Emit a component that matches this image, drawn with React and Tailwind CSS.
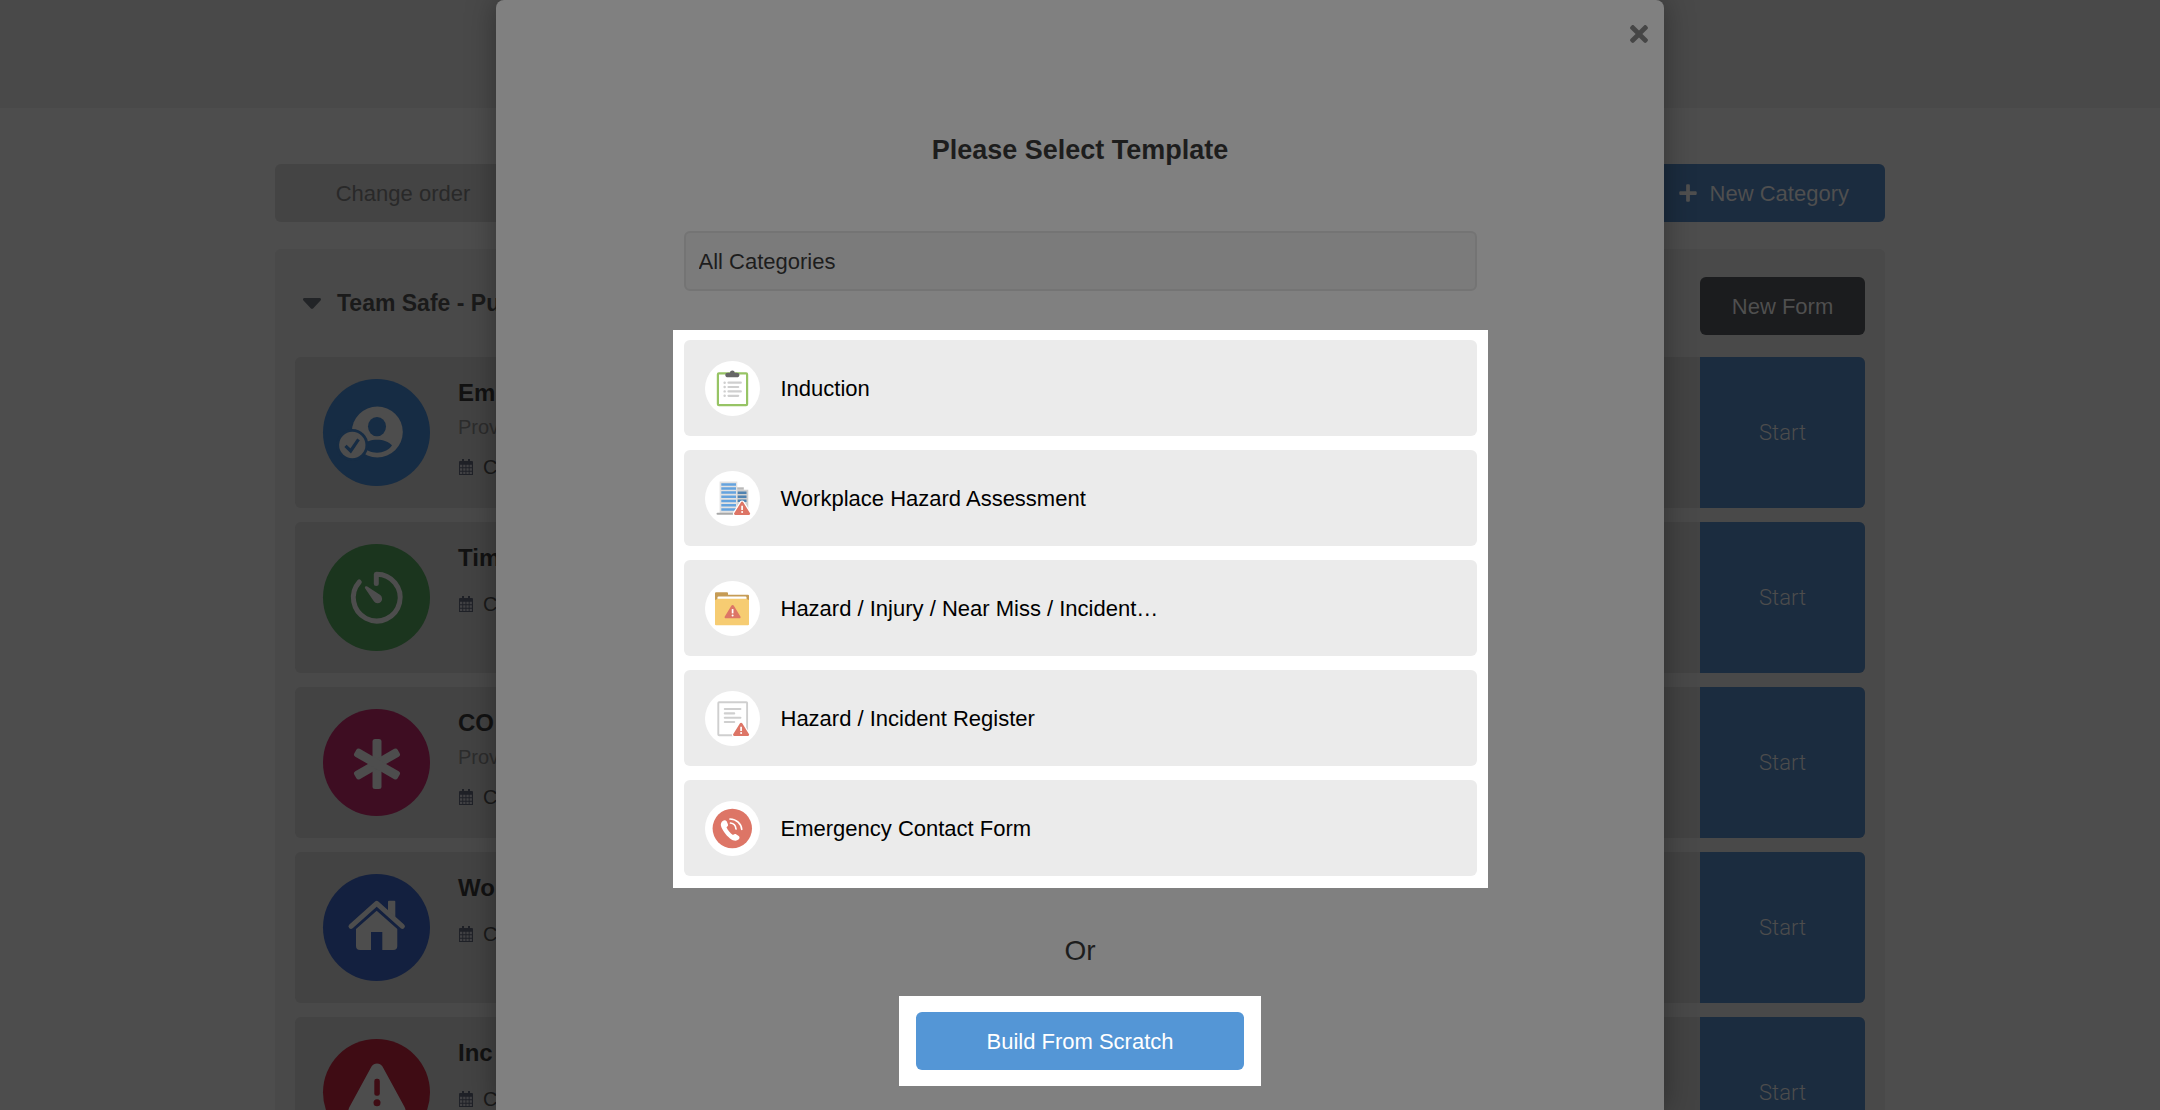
import React from 'react';
import { FaPlus, FaTimes } from 'react-icons/fa';

function PersonIcon() {
  return (
    <svg viewBox="0 0 107 107" className="size-full" aria-hidden="true">
      <circle cx="54.3" cy="53" r="25.5" fill="#4d4d4d" />
      <ellipse cx="54" cy="47.6" rx="9" ry="9.7" fill="#162c44" />
      <path d="M39 66.5C42 62.5 48 60.7 54 60.7s12 2 15 5.8c-3 4.5-9 7.2-15 7.2S43 71.5 39 66.5z" fill="#162c44" />
      <circle cx="29.3" cy="66" r="16" fill="#162c44" />
      <circle cx="29.3" cy="66" r="13.2" fill="#4d4d4d" />
      <path d="M22.5 66.800l5.200 5.200 7.800-11.700" fill="none" stroke="#162c44" strokeWidth="3.2" />
    </svg>
  );
}

function TimerIcon() {
  return (
    <svg viewBox="0 0 107 107" className="size-full" aria-hidden="true">
      <path
        d="M53.3 39.5V30.2A23.4 23.4 0 1 1 36.3 38"
        fill="none"
        stroke="#4d4d4d"
        strokeWidth="5"
        strokeLinecap="round"
        strokeLinejoin="round"
      />
      <path d="M42.300 42.600c.6-.6 1.400-.4 2 0l13 8.500a4.500 4.500 0 1 1-6.300 6.300l-8.800-12.800c-.4-.6-.5-1.500.1-2z" fill="#4d4d4d" />
    </svg>
  );
}

function AsteriskIcon() {
  return (
    <svg viewBox="0 0 107 107" className="size-full" aria-hidden="true">
      <g fill="#4d4d4d">
        <rect x="49.5" y="30" width="9" height="50" rx="2.5" />
        <rect x="49.5" y="30" width="9" height="50" rx="2.5" transform="rotate(60 54 55)" />
        <rect x="49.5" y="30" width="9" height="50" rx="2.5" transform="rotate(120 54 55)" />
      </g>
    </svg>
  );
}

function HomeIcon() {
  return (
    <svg viewBox="0 0 107 107" className="size-full" aria-hidden="true">
      <path d="M65 27.700a1 1 0 0 1 1-1h5.300a1 1 0 0 1 1 1V44L65 38z" fill="#4d4d4d" />
      <path d="M28 52.300L53.700 29.300l25.700 23" fill="none" stroke="#4d4d4d" strokeWidth="5" strokeLinecap="round" strokeLinejoin="round" />
      <path d="M53.700 36.700L74.300 55v17a4 4 0 0 1-4 4H59.300V58H48v18H37a4 4 0 0 1-4-4V55z" fill="#4d4d4d" />
    </svg>
  );
}

function WarningIcon() {
  return (
    <svg viewBox="0 0 107 107" className="size-full" aria-hidden="true">
      <path d="M48.500 27.500c2.500-4 8.500-4 11 0L81 67c4 7 1 12-5 12H32c-6 0-9-5-5-12z" fill="#4d4d4d" />
      <rect x="51.3" y="39.7" width="5.5" height="17" rx="2.3" fill="#3f0c14" />
      <circle cx="54" cy="63.7" r="3.5" fill="#3f0c14" />
    </svg>
  );
}

function CalendarIcon() {
  return (
    <svg viewBox="0 0 14 16" className="h-4 w-[14px]" aria-hidden="true">
      <path d="M1 2h12a1 1 0 0 1 1 1v13H0V3a1 1 0 0 1 1-1zM3 0h2v3H3zM9 0h2v3H9z" fill="#1f2127" />
      <path
        d="M1 7h12M1 10.500h12M1 13.800h12"
        stroke="#414144"
        strokeWidth="2.300"
        strokeDasharray="2.300 .9"
      />
    </svg>
  );
}

function CaretIcon() {
  return (
    <svg viewBox="0 0 18 11" className="h-[11px] w-[18px]" aria-hidden="true">
      <path d="M1.500 0h15c1.400 0 2 1.500 1 2.500l-7 7.500a2 2 0 0 1-3 0l-7-7.500C-.5 1.500.1 0 1.500 0z" fill="#222427" />
    </svg>
  );
}

// Red triangle shared by the hazard icons, drawn on a 16x13 box
function Hazard({ x, y, outline = '#fff' }) {
  return (
    <g transform={`translate(${x} ${y})`}>
      <path
        d="M7 .7a1.300 1.300 0 0 1 2.200 0l6.700 10.800a1.200 1.200 0 0 1-1 1.900H1.300a1.200 1.200 0 0 1-1-1.900z"
        fill="#dd7566"
        stroke={outline}
        strokeWidth="2.400"
        paintOrder="stroke"
      />
      <path d="M8.100 4.200v4.300" stroke="#fff" strokeWidth="1.700" />
      <circle cx="8.100" cy="10.500" r="1" fill="#fff" />
    </g>
  );
}

function ClipboardIcon() {
  return (
    <svg viewBox="0 0 55 55" className="size-full" aria-hidden="true">
      <rect x="12.900" y="12.400" width="29.200" height="31.800" rx="1" fill="#fff" stroke="#97c465" strokeWidth="2.200" />
      <path d="M20.300 14c0-1.500 1-2.300 2.700-2.300h2c0-3 4.700-3 4.700 0h2c1.700 0 2.700.8 2.700 2.300s-1 2.300-2.700 2.300H23c-1.700 0-2.700-.8-2.700-2.300z" fill="#666" />
      <path d="M23.500 21.700h12.300M23.500 26h9.700M23.500 30.400h12.300M23.500 34.800h9.700" stroke="#cfcfcf" strokeWidth="2.200" strokeLinecap="round" />
      <path d="M19.600 21.700h.1M19.600 26h.1M19.600 30.400h.1M19.600 34.800h.1" stroke="#cfcfcf" strokeWidth="2.400" strokeLinecap="round" />
    </svg>
  );
}

function BuildingIcon() {
  return (
    <svg viewBox="0 0 55 55" className="size-full" aria-hidden="true">
      <path d="M32 16.300h6.800v2.500H32z" fill="#b9b9b9" />
      <path d="M32 18.700h11.300V42H32z" fill="#cfcfcf" />
      <path d="M32.500 21.700h9M32.500 25.700h9M32.500 29.800h9" stroke="#4f82b0" strokeWidth="2.400" />
      <path d="M14.600 10.500h17.700v31.700H14.600z" fill="#e2e2e2" />
      <path
        d="M16.300 13.400H31M16.300 17.500H31M16.300 21.600H31M16.300 25.800H31M16.300 30H31M16.300 34.200H31M16.300 38.400H31"
        stroke="#64a3de"
        strokeWidth="2.500"
      />
      <path d="M12.500 42.700h16" stroke="#a8a8a8" strokeWidth="2" strokeLinecap="round" />
      <Hazard x="29" y="30.5" />
    </svg>
  );
}

function FolderIcon() {
  return (
    <svg viewBox="0 0 55 55" className="size-full" aria-hidden="true">
      <path d="M10 12.300a1 1 0 0 1 1-1h11a1 1 0 0 1 1 1v1.400h20a1 1 0 0 1 1 1V22H10z" fill="#c69c55" />
      <path d="M12.500 16.500a1 1 0 0 1 1-1h27a1 1 0 0 1 1 1V20h-29z" fill="#fff" />
      <path d="M10 19a5 5 0 0 0 2.500-1.200h29A5 5 0 0 0 44 19v24.300a1 1 0 0 1-1 1H11a1 1 0 0 1-1-1z" fill="#f6cc72" />
      <Hazard x="19.5" y="23.9" outline="none" />
    </svg>
  );
}

function RegisterIcon() {
  return (
    <svg viewBox="0 0 55 55" className="size-full" aria-hidden="true">
      <rect x="13.300" y="11.200" width="28.800" height="33" rx=".8" fill="#fff" stroke="#cfcfcf" strokeWidth="1.900" />
      <path d="M19.800 18h15.600M19.800 22.400h9.400M19.800 26.700h15.600M19.800 31h9.400" stroke="#cfcfcf" strokeWidth="2.100" strokeLinecap="round" />
      <Hazard x="28" y="31.6" />
    </svg>
  );
}

function PhoneIcon() {
  return (
    <svg viewBox="0 0 55 55" className="size-full" aria-hidden="true">
      <circle cx="27.300" cy="27.500" r="19.700" fill="#dd7566" />
      <path
        d="M17.700 20c1.400-1.200 3.400-.9 4.200.8l1 2.500c.5 1.300-.2 2.100-1.400 3 1.200 3 3.700 5.900 6.500 7.700 1.200-1 2.300-1.300 3.400-.6l2.300 1.600c1.200 1 1 2.500-.2 3.500-2.200 2-5.300 1.200-8.500-1.100-4-3-8.200-8.600-9.100-12.800-.3-2 .5-3.600 1.800-4.600z"
        fill="#fff"
      />
      <path d="M25.500 22c3 .3 5.200 2.700 5.500 6M25 18c6.500.2 11.300 4.500 11.700 10.300" fill="none" stroke="#fff" strokeWidth="1.700" strokeLinecap="round" />
    </svg>
  );
}

const forms = [
  { title: 'Em', note: 'Prov', color: 'bg-[#162c44]', icon: PersonIcon },
  { title: 'Tim', color: 'bg-[#1b351e]', icon: TimerIcon },
  { title: 'CO', note: 'Prov', color: 'bg-[#3e0d22]', icon: AsteriskIcon },
  { title: 'Wo', color: 'bg-[#13203f]', icon: HomeIcon },
  { title: 'Inc', color: 'bg-[#3f0c14]', icon: WarningIcon },
];

const templates = [
  { name: 'Induction', icon: ClipboardIcon },
  { name: 'Workplace Hazard Assessment', icon: BuildingIcon },
  { name: 'Hazard / Injury / Near Miss / Incident…', icon: FolderIcon },
  { name: 'Hazard / Incident Register', icon: RegisterIcon },
  { name: 'Emergency Contact Form', icon: PhoneIcon },
];

function FormCard({ form }) {
  const Icon = form.icon;
  return (
    <li className="flex h-[151px] overflow-hidden rounded-md bg-[#434343]">
      <div className="flex flex-1 items-start gap-7 pl-7">
        <div className={`mt-[22px] size-[107px] shrink-0 rounded-full ${form.color}`}>
          <Icon />
        </div>
        <div className="flex flex-col pt-5">
          <h3 className="mb-1 text-2xl leading-8 font-bold text-[#121212]">{form.title}</h3>
          {form.note && <p className="text-xl text-[#2c2c2c]">{form.note}</p>}
          <p className="mt-3 flex items-center gap-2.5 pl-px text-xl text-[#1a1a1a]">
            <CalendarIcon />
            C
          </p>
        </div>
      </div>
      <button type="button" className="w-[165px] bg-[#1b2c3f] font-['Roboto',sans-serif] text-[22px] font-light text-[#4d4d4d]">
        Start
      </button>
    </li>
  );
}

function FormsPage() {
  return (
    <div>
      <header className="h-[108px] bg-[#494949]" />
      <main className="mx-auto max-w-[1610px] pt-14">
        <div className="flex justify-between">
          <button type="button" className="h-[58px] w-64 rounded-md bg-[#444444] text-[22px] text-[#292929]">
            Change order
          </button>
          <button
            type="button"
            className="flex h-[58px] items-center gap-3 rounded-md bg-[#1b2c3f] px-9 text-[22px] text-[#4f4f4f]"
          >
            <FaPlus className="size-5" aria-hidden="true" />
            New Category
          </button>
        </div>

        <section className="mt-[27px] rounded-md bg-[#494949] px-5 pt-7 pb-5">
          <div className="flex items-center justify-between pl-2">
            <h2 className="flex items-center gap-4 pb-1.5 text-[23px] font-bold text-[#1a1a1a]">
              <CaretIcon />
              Team Safe - Pu
            </h2>
            <button type="button" className="h-[58px] w-[165px] rounded-md bg-[#1b1c1e] text-[22px] text-[#4f4f4f]">
              New Form
            </button>
          </div>
          <ul className="mt-[22px] space-y-[14px]">
            {forms.map((form) => (
              <FormCard key={form.title} form={form} />
            ))}
          </ul>
        </section>
      </main>
    </div>
  );
}

function TemplateModal() {
  return (
    <div className="absolute inset-0 flex justify-center">
      <div
        role="dialog"
        aria-labelledby="template-title"
        className="relative flex w-full max-w-[1168px] flex-col items-center rounded-t-lg bg-[#808080] shadow-[0_0_30px_rgba(0,0,0,0.35)]"
      >
        <button type="button" aria-label="Close" className="absolute top-[21px] right-[12px] text-[#464646]">
          <FaTimes className="size-[26px]" aria-hidden="true" />
        </button>

        <h1 id="template-title" className="mt-[130px] text-[27px] leading-10 font-bold text-[#1d1d1d]">
          Please Select Template
        </h1>

        <select
          aria-label="Category"
          className="mt-[61px] h-[60px] w-full max-w-[793px] appearance-none rounded-md border-2 border-[#747474] bg-[#7b7b7b] px-[13px] text-[22px] text-[#1d1d1d]"
        >
          <option>All Categories</option>
        </select>

        <ul className="mt-[39px] w-full max-w-[815px] space-y-[14px] bg-white px-[11px] pt-[10px] pb-[12px]">
          {templates.map(({ name, icon: Icon }) => (
            <li key={name}>
              <button type="button" className="flex h-24 w-full items-center gap-[21px] rounded-md bg-[#ebebeb] px-[21px] text-[22px] text-black">
                <span className="size-[55px] rounded-full bg-white">
                  <Icon />
                </span>
                {name}
              </button>
            </li>
          ))}
        </ul>

        <p className="mt-[43px] text-[28px] leading-10 text-[#1d1d1d]">Or</p>

        <div className="mt-[25px] bg-white px-[17px] py-4">
          <button type="button" className="h-[58px] w-[328px] rounded-md bg-[#5496d6] text-[22px] text-white">
            Build From Scratch
          </button>
        </div>
      </div>
    </div>
  );
}

export default function App() {
  return (
    <div className="relative h-screen overflow-hidden bg-[#4d4d4d] font-['Liberation_Sans',Arial,sans-serif]">
      <FormsPage />
      <TemplateModal />
    </div>
  );
}
